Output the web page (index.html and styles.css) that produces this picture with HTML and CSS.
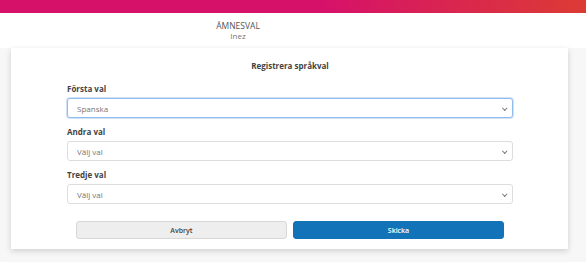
FILE: index.html
```html
<!DOCTYPE html>
<html lang="sv">
<head>
    <meta charset="UTF-8">
    <meta name="viewport" content="width=device-width, initial-scale=1">
    <title>Ämnesval</title>
    <link rel="stylesheet" href="styles.css">
</head>
<body>
    <div class="topbar"></div>

    <header class="header">
        <div class="header-title">ÄMNESVAL</div>
        <div class="header-name">Inez</div>
    </header>

    <main class="main">
        <div class="card">
            <h2>Registrera språkval</h2>
            <form class="form">
                <div class="field">
                    <label for="first">Första val</label>
                    <div class="select-wrap">
                        <select id="first" class="focused">
                            <option>Spanska</option>
                        </select>
                    </div>
                </div>
                <div class="field">
                    <label for="second">Andra val</label>
                    <div class="select-wrap">
                        <select id="second">
                            <option>Välj val</option>
                        </select>
                    </div>
                </div>
                <div class="field">
                    <label for="third">Tredje val</label>
                    <div class="select-wrap">
                        <select id="third">
                            <option>Välj val</option>
                        </select>
                    </div>
                </div>
                <div class="buttons">
                    <button type="button" class="btn btn-cancel">Avbryt</button>
                    <button type="submit" class="btn btn-send">Skicka</button>
                </div>
            </form>
        </div>
    </main>
</body>
</html>
```

FILE: styles.css
```css
* {
    margin: 0;
    padding: 0;
    box-sizing: border-box;
}

body {
    font-family: "Open Sans", Arial, sans-serif;
    background-color: #f7f7f7;
    width: 586px;
    height: 262px;
    overflow: hidden;
}

.topbar {
    height: 13px;
    background: linear-gradient(90deg, #d6116a 0%, #d6116a 55%, #dc3b34 100%);
}

.header {
    height: 35px;
    background-color: #ffffff;
    padding-top: 8px;
    padding-right: 110px;
    text-align: center;
    color: #555;
    font-size: 8.5px;
    line-height: 10px;
}

.header-name {
    color: #777;
    font-size: 8px;
}

.main {
    padding: 0 18px 0 11px;
}

.card {
    background-color: #ffffff;
    height: 201px;
    box-shadow: 0 2px 6px rgba(0, 0, 0, 0.16);
    padding: 13px 55px 0 56px;
}

h2 {
    text-align: center;
    font-size: 8px;
    line-height: 10px;
    font-weight: 700;
    color: #444;
    margin-bottom: 13px;
}

.form {
    display: flex;
    flex-direction: column;
    gap: 9px;
}

.field {
    display: flex;
    flex-direction: column;
    gap: 4px;
}

label {
    font-size: 8px;
    line-height: 10px;
    font-weight: 700;
    color: #444;
}

.select-wrap {
    position: relative;
}

.select-wrap::after {
    content: "";
    position: absolute;
    right: 7px;
    top: 7.5px;
    width: 2.5px;
    height: 2.5px;
    border-right: 1px solid #777;
    border-bottom: 1px solid #777;
    transform: rotate(45deg);
    pointer-events: none;
}

select {
    appearance: none;
    -webkit-appearance: none;
    display: block;
    width: 100%;
    height: 20px;
    padding: 0 9px;
    font-family: inherit;
    font-size: 8px;
    color: #777;
    background-color: #ffffff;
    border: 1px solid #ddd;
    border-radius: 3px;
    outline: none;
}

select.focused {
    border-color: #8fbdee;
    box-shadow: 0 0 0 1px rgba(120, 170, 235, 0.35);
}

.buttons {
    display: flex;
    gap: 6px;
    padding: 8px 9px 0;
}

.btn {
    flex: 1;
    height: 18px;
    font-family: inherit;
    font-size: 7px;
    font-weight: 600;
    border-radius: 3px;
    cursor: pointer;
}

.btn-cancel {
    background-color: #eeeeee;
    border: 1px solid #d8d8d8;
    color: #444;
}

.btn-send {
    background-color: #1273b8;
    border: 1px solid #1273b8;
    color: #ffffff;
}
```
